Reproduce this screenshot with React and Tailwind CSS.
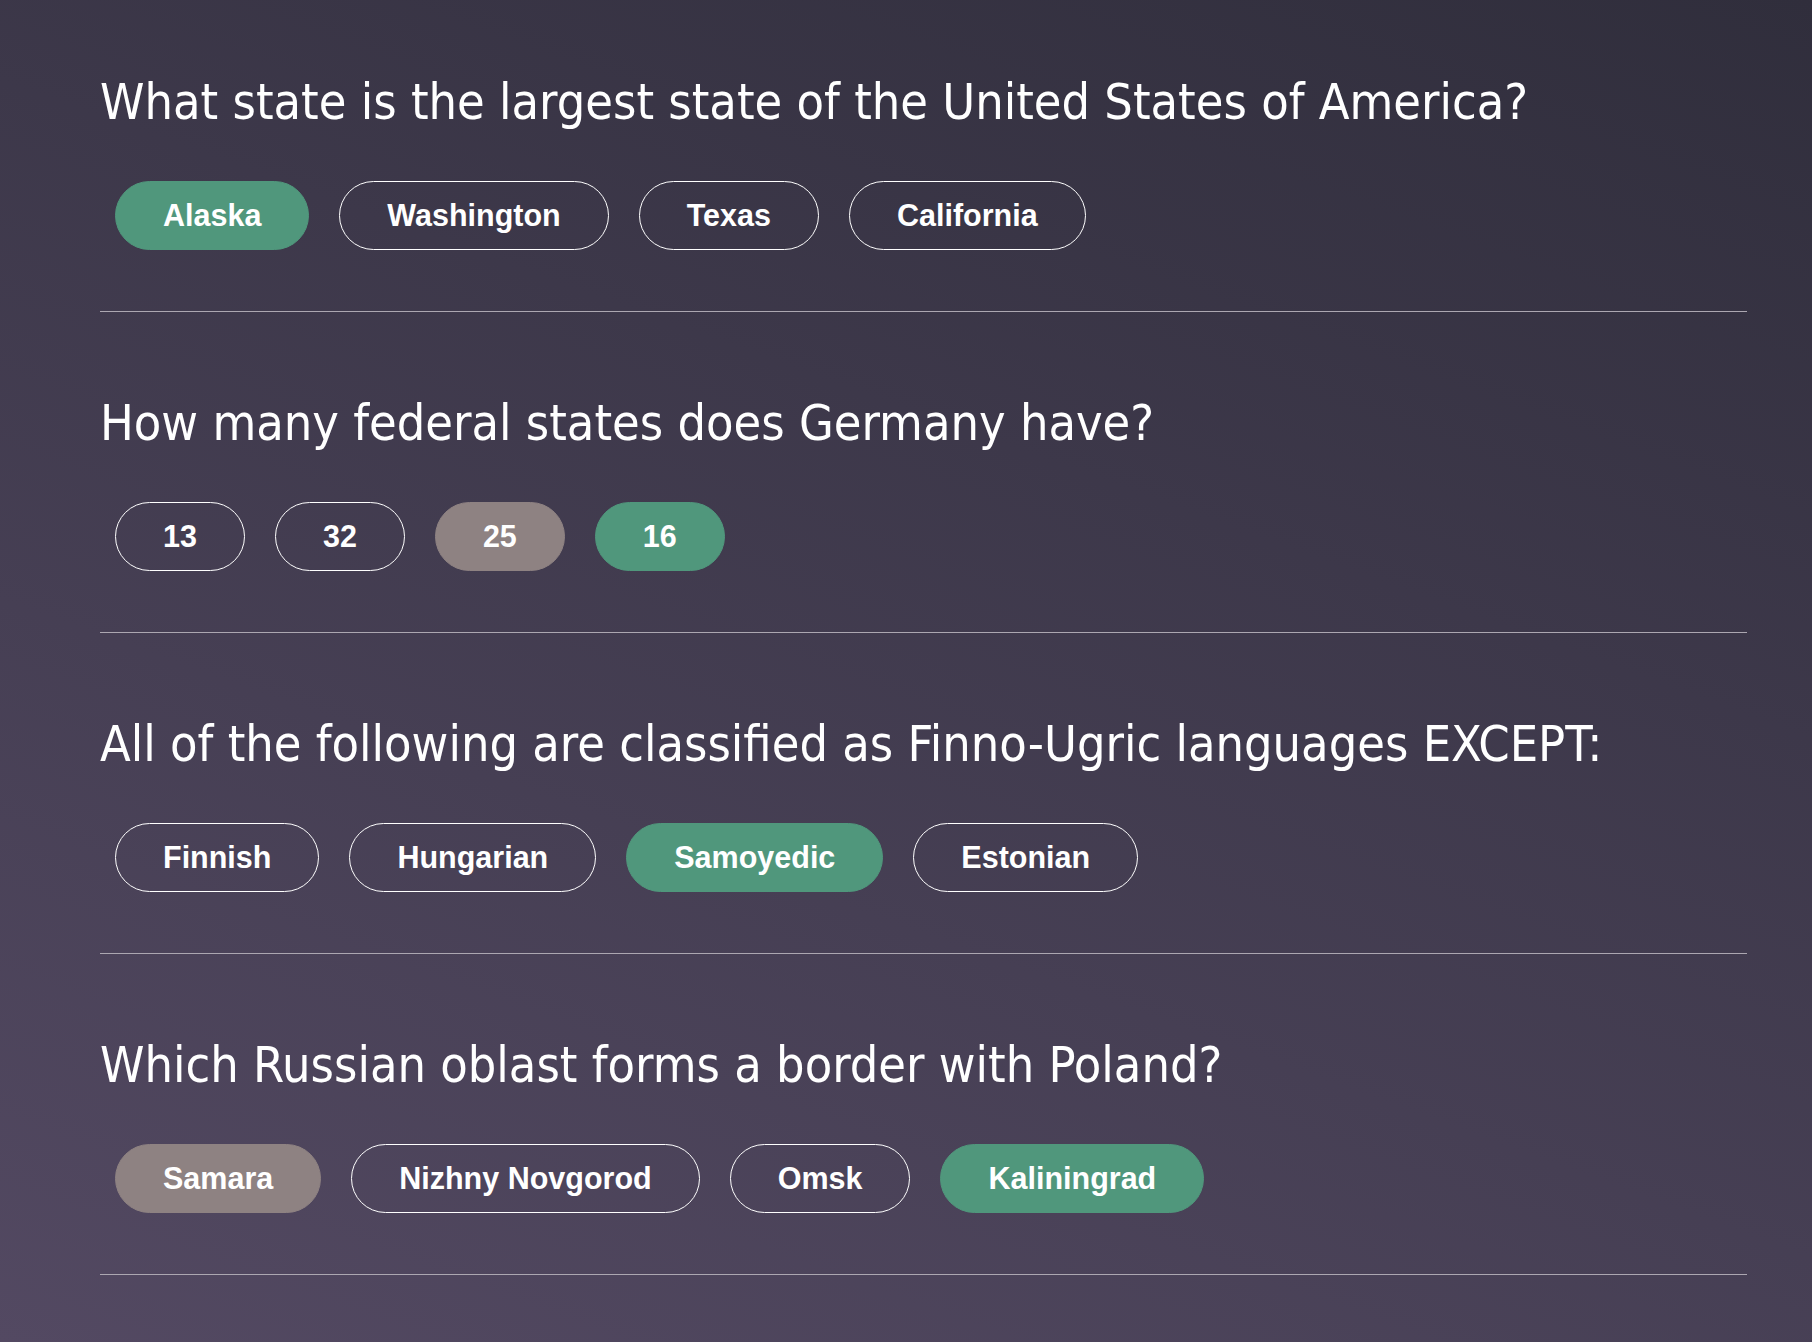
import { useState } from "react";

const questions = [
  {
    id: 1,
    text: "What state is the largest state of the United States of America?",
    answers: ["Alaska", "Washington", "Texas", "California"],
    correct: "Alaska",
    picked: "Alaska",
  },
  {
    id: 2,
    text: "How many federal states does Germany have?",
    answers: ["13", "32", "25", "16"],
    correct: "16",
    picked: "25",
  },
  {
    id: 3,
    text: "All of the following are classified as Finno-Ugric languages EXCEPT:",
    answers: ["Finnish", "Hungarian", "Samoyedic", "Estonian"],
    correct: "Samoyedic",
    picked: "Samoyedic",
  },
  {
    id: 4,
    text: "Which Russian oblast forms a border with Poland?",
    answers: ["Samara", "Nizhny Novgorod", "Omsk", "Kaliningrad"],
    correct: "Kaliningrad",
    picked: "Samara",
  },
];

function AnswerButton({ label, state, onClick }) {
  // green = correct answer, taupe = wrong pick, outline = untouched
  let look = "border-white bg-transparent";
  if (state === "correct") look = "border-[#50977c] bg-[#50977c]";
  if (state === "wrong") look = "border-[#8e8282] bg-[#8e8282]";

  return (
    <button
      onClick={onClick}
      className={`h-[69px] px-[47px] flex items-center justify-center rounded-full border text-white font-bold text-[30.5px] font-['Liberation_Sans',Arial,sans-serif] ${look}`}
    >
      {label}
    </button>
  );
}

function Question({ question }) {
  const [picked, setPicked] = useState(question.picked);

  const stateOf = (answer) => {
    if (answer === question.correct) return "correct";
    if (answer === picked) return "wrong";
    return "idle";
  };

  return (
    <div className="border-b border-[#aca7b1] pb-[61px]">
      <h2 className="text-white text-[50px] leading-[58px] font-normal font-['DejaVu_Sans_Condensed','DejaVu_Sans',sans-serif]">
        {question.text}
      </h2>

      {/* answer pills */}
      <div className="flex gap-[30px] pl-[15px] mt-[50px]">
        {question.answers.map((answer) => (
          <AnswerButton
            key={answer}
            label={answer}
            state={stateOf(answer)}
            onClick={() => setPicked(answer)}
          />
        ))}
      </div>
    </div>
  );
}

export default function App() {
  return (
    <div className="min-h-screen bg-[linear-gradient(200deg,#302e3c_0%,#534962_100%)] pl-[100px] pr-[65px] pt-[73px] pb-[60px]">
      <div className="flex flex-col gap-[82px]">
        {questions.map((q) => (
          <Question key={q.id} question={q} />
        ))}
      </div>
    </div>
  );
}
